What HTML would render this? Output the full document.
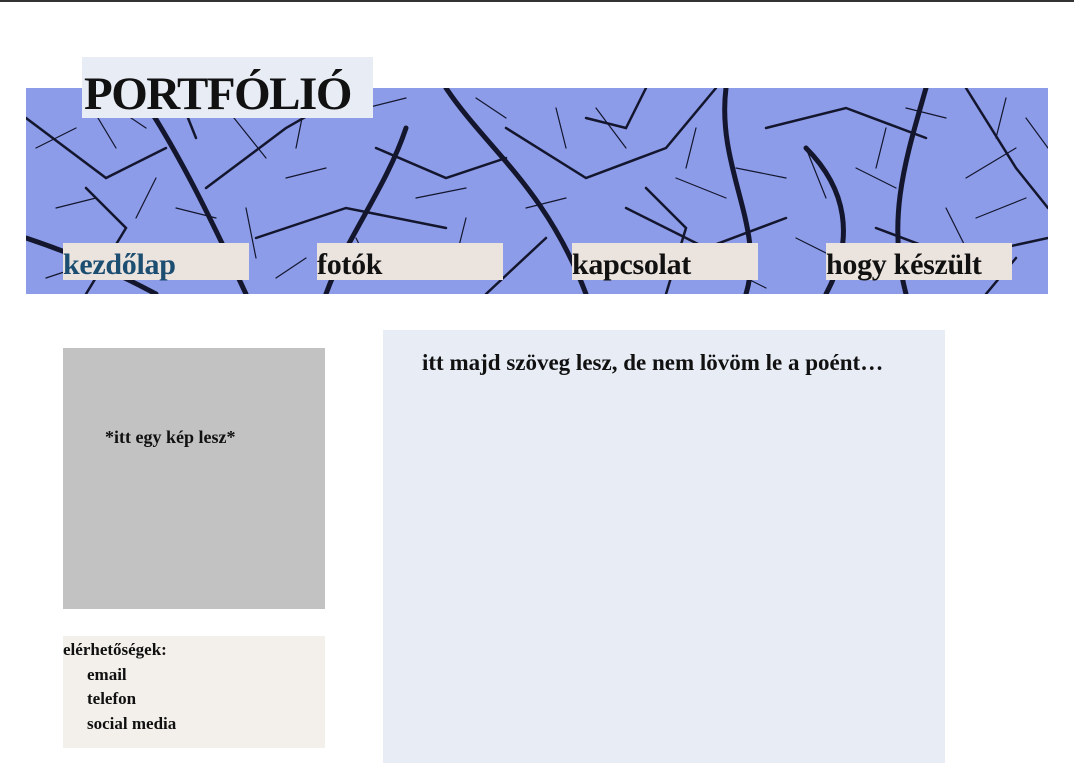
<!DOCTYPE html>
<html><head><meta charset="utf-8"><style>
*{margin:0;padding:0;box-sizing:border-box}
body{width:1074px;height:763px;background:#fff;position:relative;overflow:hidden;font-family:"Liberation Serif",serif;font-weight:bold;color:#111}
.abs{position:absolute}
.topline{left:0;top:0;width:1074px;height:2px;background:#333}
.banner{left:26px;top:88px;width:1022px;height:206px;background:#8c9ce8;overflow:hidden}
.title{left:82px;top:57px;width:291px;height:61px;background:#e8edf5;font-size:47px;line-height:74px;padding-left:2px;letter-spacing:-1.5px}
.nav{top:243px;width:186px;height:37px;background:#ebe3de;font-size:30px;line-height:44px;letter-spacing:-0.3px}
.gray{left:63px;top:348px;width:262px;height:261px;background:#c2c2c2}
.contact{left:63px;top:636px;width:262px;height:112px;background:#f3f0eb;font-size:17px;line-height:24.5px;padding-top:2px}
.main{left:383px;top:330px;width:562px;height:433px;background:#e8edf5}
</style></head><body>
<div class="abs topline"></div>
<div class="abs banner">
<svg width="1022" height="206" viewBox="0 0 1022 206" fill="none" stroke="#14162e" stroke-linecap="round">
<g stroke-width="5">
<path d="M110 0 C150 60 180 120 220 206"/>
<path d="M420 0 C460 60 520 100 560 206"/>
<path d="M700 0 C690 80 740 140 720 206"/>
<path d="M900 0 C880 70 860 130 880 206"/>
<path d="M0 150 C60 170 100 190 130 206"/>
<path d="M300 206 C320 150 360 100 380 40"/>
<path d="M780 60 C820 100 830 150 800 206"/>
</g>
<g stroke-width="2.5">
<path d="M0 30 L80 90 L140 60"/><path d="M180 100 L260 40 L330 0"/><path d="M230 150 L320 120 L420 140"/>
<path d="M480 40 L560 90 L640 60 L690 0"/><path d="M600 120 L680 160 L760 130"/><path d="M740 40 L820 20 L900 50"/>
<path d="M940 0 L990 80 L1022 120"/><path d="M850 140 L930 170 L1022 150"/><path d="M520 150 L460 206"/>
<path d="M60 206 L100 140 L60 100"/><path d="M350 60 L420 90 L480 70"/><path d="M640 206 L660 140 L620 100"/>
<path d="M960 206 L990 170"/><path d="M150 0 L170 50"/><path d="M620 0 L600 40 L560 30"/>
</g>
<g stroke-width="1.2">
<path d="M10 60 L50 40 M30 120 L70 110 M90 20 L120 40 M200 20 L240 70 M260 90 L300 80 M340 20 L380 10 M390 110 L440 100 M450 10 L480 30 M500 120 L540 110 M570 20 L600 60 M650 90 L700 110 M710 80 L760 90 M770 150 L810 170 M830 80 L870 100 M880 20 L920 30 M940 90 L990 60 M1000 30 L1022 60 M950 130 L1000 110 M150 120 L190 130 M170 170 L200 190 M400 170 L440 190 M590 180 L620 170 M840 190 L880 180 M20 190 L50 180 M250 190 L280 170 M700 180 L740 200"/>
<path d="M60 10 L90 60 M130 90 L110 130 M280 10 L270 60 M330 150 L350 190 M540 60 L530 20 M670 40 L660 80 M800 110 L780 60 M920 120 L940 160 M980 10 L970 50 M440 130 L430 170 M220 120 L230 170 M860 40 L850 80"/>
</g>
</svg>
</div>
<div class="abs title">PORTFÓLIÓ</div>
<div class="abs nav" style="left:63px;color:#1c4e72">kezdőlap</div>
<div class="abs nav" style="left:317px">fotók</div>
<div class="abs nav" style="left:572px">kapcsolat</div>
<div class="abs nav" style="left:826px">hogy készült</div>
<div class="abs gray"><div class="abs" style="left:42px;top:79px;font-size:18px">*itt egy kép lesz*</div></div>
<div class="abs contact">elérhetőségek:<br><span style="padding-left:24px">email</span><br><span style="padding-left:24px">telefon</span><br><span style="padding-left:24px">social media</span></div>
<div class="abs main"><div class="abs" style="left:39px;top:20px;font-size:23px;white-space:nowrap">itt majd szöveg lesz, de nem lövöm le a poént…</div></div>
</body></html>
